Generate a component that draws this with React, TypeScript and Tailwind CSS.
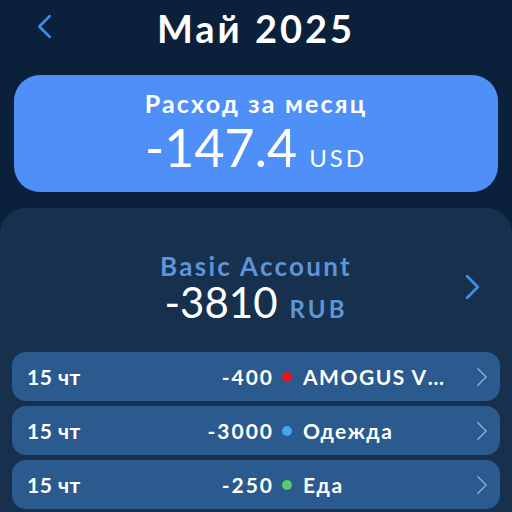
interface Expense {
  date: string;
  amount: number;
  color: string;
  name: string;
}

const expenses: Expense[] = [
  { date: '15 чт', amount: -400, color: 'bg-[#f01418]', name: 'AMOGUS VENT' },
  { date: '15 чт', amount: -3000, color: 'bg-[#44a6f5]', name: 'Одежда' },
  { date: '15 чт', amount: -250, color: 'bg-[#5cc96a]', name: 'Еда' },
];

function Chevron({ dir, className, strokeWidth }: { dir: 'left' | 'right'; className: string; strokeWidth: number }) {
  return (
    <svg className={className} viewBox="0 0 14 24" fill="none" stroke="currentColor" strokeWidth={strokeWidth} strokeLinecap="round" strokeLinejoin="round">
      {dir === 'left' ? <polyline points="12,2 2,12 12,22" /> : <polyline points="2,2 12,12 2,22" />}
    </svg>
  );
}

function ExpenseRow({ item }: { item: Expense }) {
  return (
    <div className="flex h-[49px] items-center rounded-[14px] bg-[#2a5a8e] pl-[15px] pr-[12px] text-[21px] font-bold leading-none text-white">
      <span className="w-[80px] tracking-[0.5px]">{item.date}</span>
      <span className="flex-1 text-right tracking-[2px]">{item.amount}</span>
      <span className={`ml-[8px] h-[10px] w-[10px] shrink-0 rounded-full ${item.color}`} />
      <span className="ml-[11px] w-[150px] truncate py-[2px] tracking-[1.5px]">{item.name}</span>
      <Chevron dir="right" className="ml-[23px] h-[20px] w-[12px] shrink-0 text-[#86acd8]" strokeWidth={1.8} />
    </div>
  );
}

export default function App() {
  return (
    <div
      className="flex h-[512px] w-[512px] flex-col overflow-hidden bg-[#0a203b] text-white"
      style={{ fontFamily: 'Lato, "Noto Sans", sans-serif' }}
    >
      {/* Header */}
      <div className="relative flex h-[58px] justify-center pt-[9px]">
        <Chevron dir="left" className="absolute left-[37px] top-[14px] h-[25px] w-[15px] text-[#3d8fe6]" strokeWidth={2.6} />
        <h1 className="text-[38px] font-bold leading-none tracking-[3px]">Май 2025</h1>
      </div>

      {/* Month total */}
      <div className="mx-[14px] mt-[17px] flex h-[117px] flex-col items-center rounded-[26px] bg-[#4f8ff8] pt-[16px]">
        <div className="text-[25px] font-bold leading-none tracking-[2.2px]">Расход за месяц</div>
        <div className="mt-[5px] flex items-baseline gap-[12px] leading-none">
          <span className="text-[52px] font-normal">-147.4</span>
          <span className="text-[24px] tracking-[3px]">USD</span>
        </div>
      </div>

      {/* Account panel */}
      <div className="mt-[16px] flex flex-1 flex-col rounded-t-[26px] bg-[#17304e] px-[12px]">
        <div className="relative flex h-[144px] flex-col items-center pt-[46px]">
          <div className="text-[26px] font-bold leading-[24px] tracking-[2.3px] text-[#5e95d6]">Basic Account</div>
          <div className="mt-[3px] flex items-baseline gap-[12px] leading-none">
            <span className="text-[42px] font-normal">-3810</span>
            <span className="text-[24px] font-bold tracking-[3px] text-[#5e95d6]">RUB</span>
          </div>
          <Chevron dir="right" className="absolute right-[20px] top-[66px] h-[26px] w-[15px] text-[#3d8fe6]" strokeWidth={2.6} />
        </div>
        <div className="flex flex-col gap-[5px]">
          {expenses.map((item, i) => (
            <ExpenseRow key={i} item={item} />
          ))}
        </div>
      </div>
    </div>
  );
}
